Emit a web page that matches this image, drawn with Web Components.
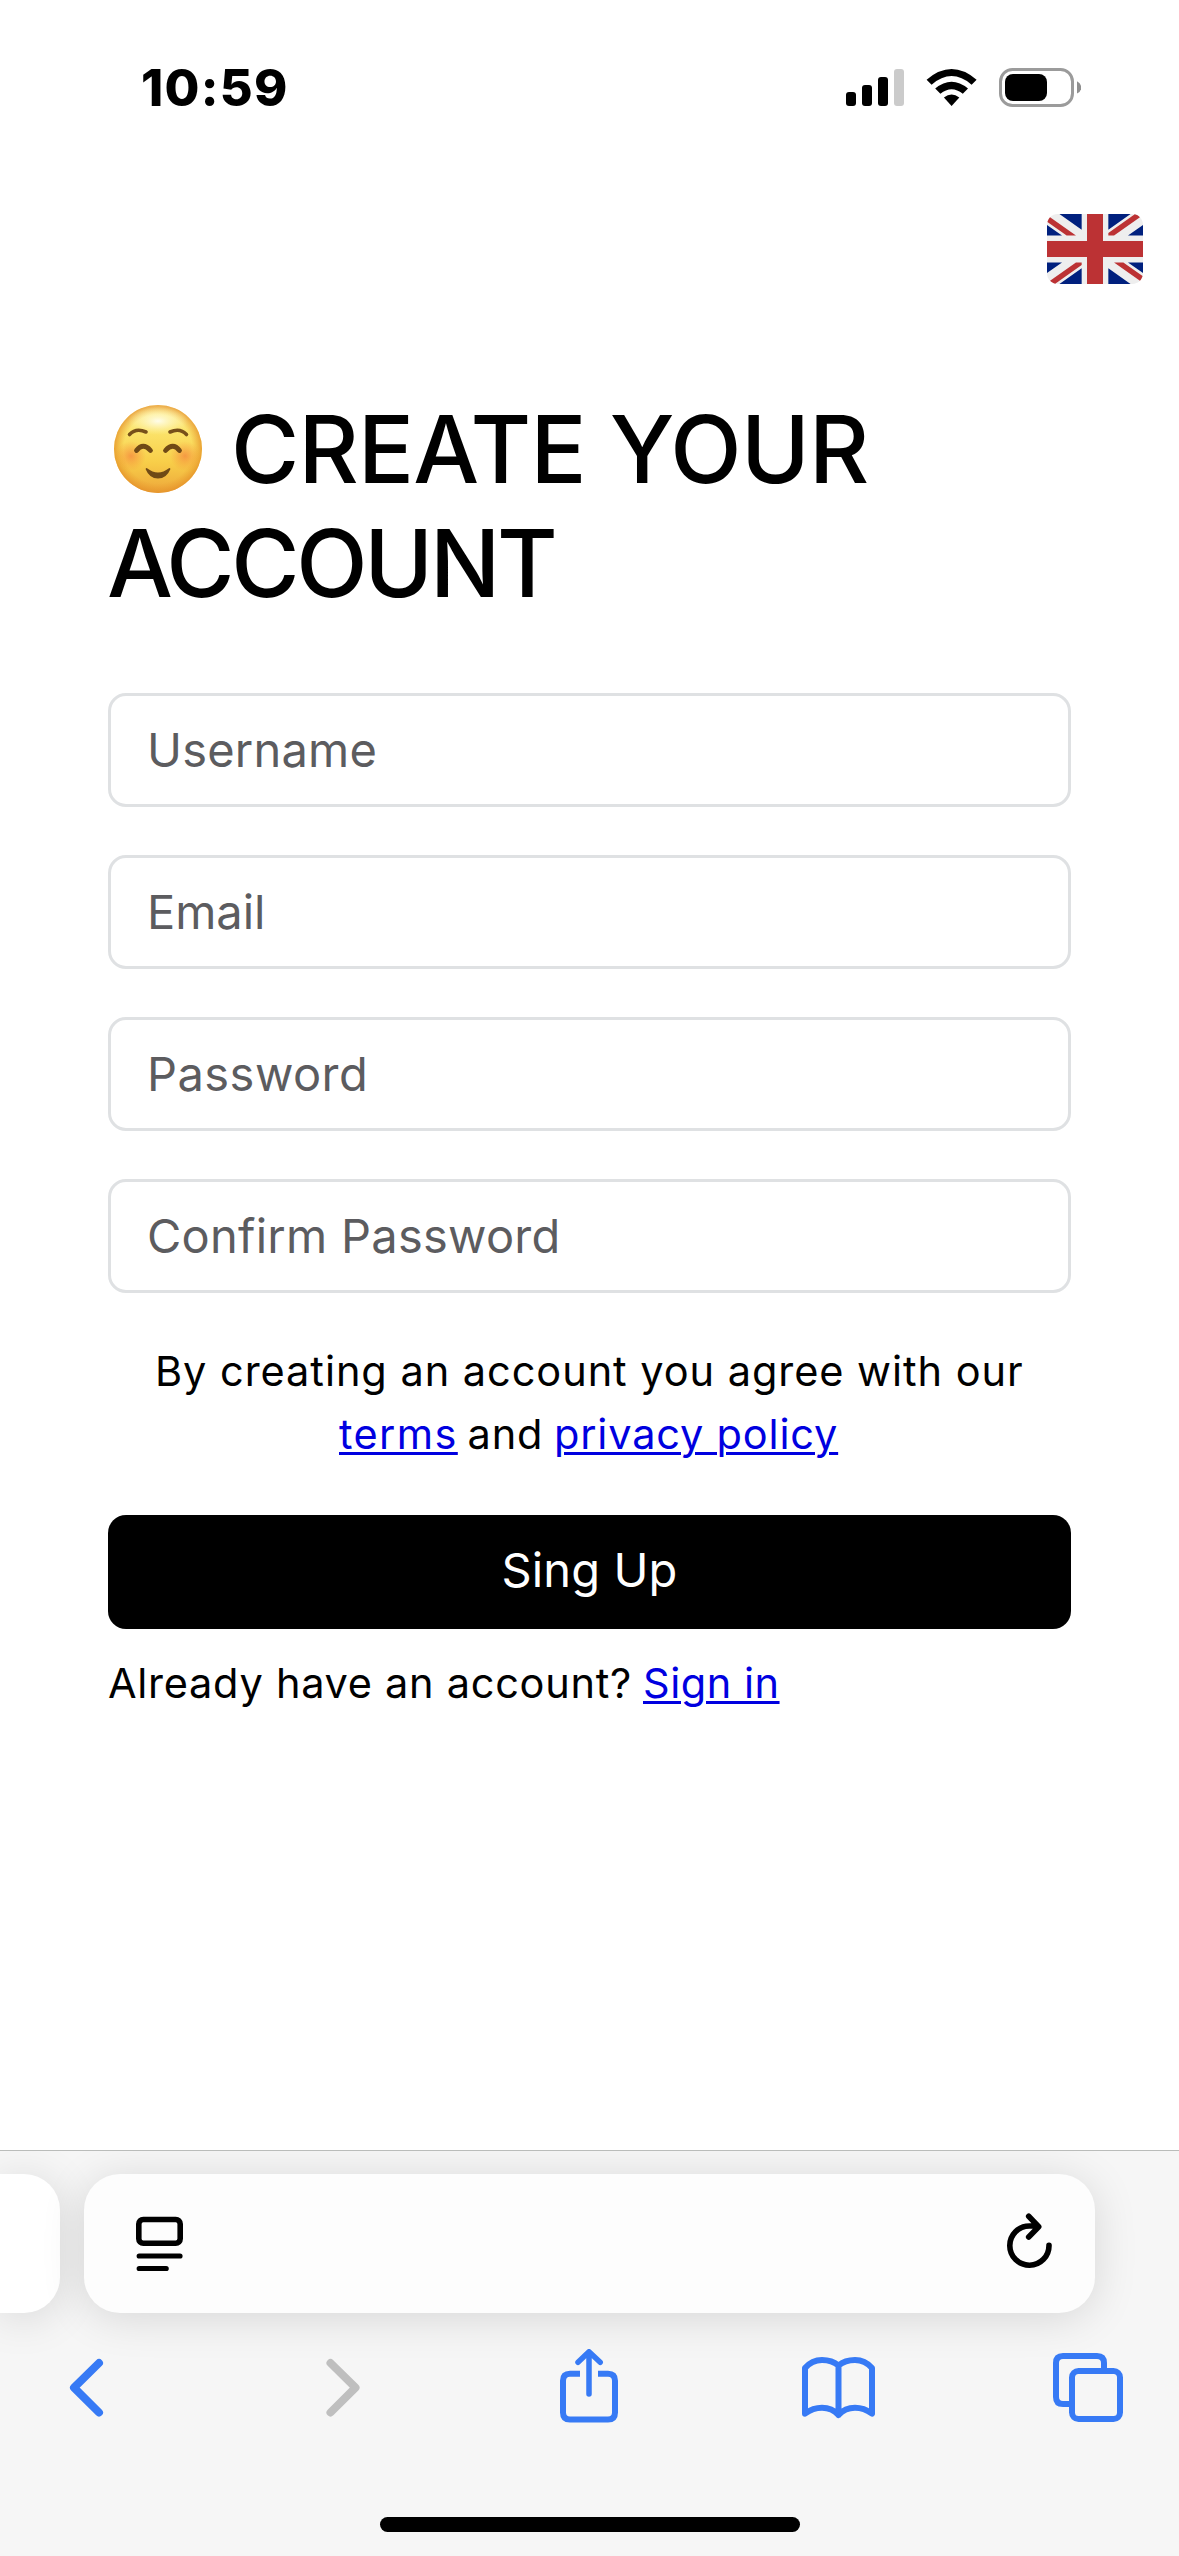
<!DOCTYPE html>
<html lang="en">
<head>
<meta charset="utf-8">
<title>Create your account</title>
<style>
  html, body { margin: 0; background: #fff; }
  body { width: 1179px; height: 2556px; overflow: hidden; font-family: Inter, "Liberation Sans", sans-serif; color: #000; }
</style>
</head>
<body>
<signup-screen></signup-screen>
<script>
const define = (name, html, ready) => {
  const tpl = document.createElement('template');
  tpl.innerHTML = html.trim();
  customElements.define(name, class extends HTMLElement {
    constructor() {
      super();
      this.attachShadow({ mode: 'open' }).append(tpl.content.cloneNode(true));
    }
    connectedCallback() { if (ready) ready(this, this.shadowRoot); }
  });
};

// Tracks its label out or in so the glyphs span exactly `width` pixels.
define('tracked-text', `
  <style>
    :host { display: block; flex: none; }
    :host([link]) span { color: #0000e0; text-decoration: underline 3px; text-underline-offset: 3px; }
    span { display: block; width: max-content; white-space: pre; }
  </style><span></span>`, (host, root) => {
  const span = root.querySelector('span');
  const text = host.getAttribute('text');
  const width = +host.getAttribute('width');
  span.textContent = text;
  const cs = getComputedStyle(host);
  const ctx = document.createElement('canvas').getContext('2d');
  ctx.font = `${cs.fontWeight} ${cs.fontSize} ${cs.fontFamily}`;
  const m = ctx.measureText(text);
  const ink = m.actualBoundingBoxRight + m.actualBoundingBoxLeft;
  host.style.width = width + 'px';
  span.style.letterSpacing = (width - ink) / (text.length - 1) + 'px';
  span.style.marginLeft = m.actualBoundingBoxLeft + 'px';
});

define('status-bar', `
  <style>
    :host { display: flex; justify-content: space-between; align-items: flex-start; height: 156px; padding: 58px 98px 0 143px; box-sizing: border-box; font-size: 50.500px; line-height: 60px; font-weight: 800; }
    .icons { display: flex; gap: 22px; padding-top: 10px; }
    svg { display: block; }
  </style>
  <tracked-text text="10:59" width="143"></tracked-text>
  <div class="icons">
    <svg width="58" height="39" viewBox="846 68 58 39"><rect x="846" y="92" width="10" height="14" rx="3"/><rect x="862" y="85" width="10" height="21" rx="3"/><rect x="878" y="77" width="10" height="29" rx="3"/><rect x="894" y="69" width="10" height="37" rx="3" fill="#cbcbcb"/></svg>
    <svg width="51" height="39" viewBox="926 68 51 39"><path d="M926.6 79.7Q951.6 58.3 976.6 79.7L971.6 84.7Q951.6 67.5 931.6 84.7Z"/><path d="M935.2 88.6Q951.6 75 968 88.6L962.8 93.8Q951.6 84.8 940.4 93.8Z"/><path d="M943.9 97.4Q951.6 91.4 959.3 97.4L951.6 106Z"/></svg>
    <svg width="82" height="39" viewBox="999 68 82 39"><rect x="1000.5" y="69.5" width="72" height="36" rx="12" fill="none" stroke="#9b9b9b" stroke-width="3"/><rect x="1005" y="74" width="42" height="27" rx="8"/><path d="M1077 81.3Q1081.2 83.5 1081.2 87.5T1077 93.6Z" fill="#8f8f8f"/></svg>
  </div>`);

define('language-flag', `
  <style>:host { display: flex; justify-content: flex-end; height: 178px; padding: 58px 36px 0 0; } svg { display: block; }</style>
  <svg width="96" height="70" viewBox="0 5 36 26" preserveAspectRatio="none" role="img" aria-label="English">
    <rect y="5" width="36" height="26" rx="4" fill="#eee"/>
    <path fill="#00207e" d="M0 9.06V13h5.63zM4.66 31H13v-5.84zM23 25.16V31h8.33zM0 23v3.94L5.63 23zM31.34 5H23v5.84zM36 26.94V23h-5.63zM36 13V9.06L30.37 13zM13 5H4.66L13 10.84z"/>
    <path fill="#bc3234" d="M25.14 23l9.71 6.8c.47-.48.81-1.08.99-1.75L28.63 23zM13 23h-2.14l-9.71 6.8c.52.53 1.19.91 1.94 1.09L13 23.94zM23 13h2.14l9.71-6.8c-.52-.53-1.19-.91-1.94-1.09L23 12.06zM10.86 13L1.15 6.2C.68 6.68.34 7.28.16 7.95L7.37 13zM21 5h-6v10H0v6h15v10h6V21h15v-6H21z"/>
  </svg>`);

define('smiling-face', `
  <style>:host { display: block; width: 88px; height: 88px; } svg { display: block; }</style>
  <svg width="88" height="88" viewBox="0 0 88 88" fill="none" stroke-linecap="round">
    <defs>
      <linearGradient id="skin" x1="0" y1="0" x2="0" y2="1"><stop offset="0" stop-color="#fff3a6"/><stop offset=".3" stop-color="#fbe36a"/><stop offset=".65" stop-color="#f8ce49"/><stop offset="1" stop-color="#eda63a"/></linearGradient>
      <radialGradient id="rim"><stop offset=".78" stop-color="#e99a2c" stop-opacity="0"/><stop offset="1" stop-color="#e48f28" stop-opacity=".75"/></radialGradient>
      <radialGradient id="shine"><stop offset="0" stop-color="#fffef0" stop-opacity=".95"/><stop offset="1" stop-color="#fff6b0" stop-opacity="0"/></radialGradient>
      <radialGradient id="blush"><stop offset="0" stop-color="#f47b3c" stop-opacity=".65"/><stop offset="1" stop-color="#f68a3c" stop-opacity="0"/></radialGradient>
    </defs>
    <circle cx="44" cy="44" r="44" fill="url(#skin)"/><circle cx="44" cy="44" r="44" fill="url(#rim)"/>
    <ellipse cx="44" cy="16" rx="30" ry="14" fill="url(#shine)"/>
    <circle cx="17" cy="51" r="15" fill="url(#blush)"/><circle cx="71" cy="51" r="15" fill="url(#blush)"/>
    <path d="M15.500 29.500Q22 22.500 32 27M56 27Q66 22.500 72.500 29.500" stroke="#77501a" stroke-width="3.600"/>
    <path d="M22.500 45.500Q29 37 36.500 45.500M51.500 45.500Q59 37 65.500 45.500" stroke="#704a16" stroke-width="4.800"/>
    <path d="M32.500 64Q44 73 55.500 64Q52 72.700 44 72.700T32.500 64Z" fill="#704a16" stroke="#704a16" stroke-width="1.800" stroke-linejoin="round"/>
  </svg>`);

define('page-title', `
  <style>
    :host { display: flex; flex-direction: column; font-size: 93px; line-height: 114px; font-weight: 500; }
    .row { display: flex; gap: 34px; padding-left: 6px; }
    .row + tracked-text { margin-left: 1px; }
    smiling-face { margin-top: 13px; }
  </style>
  <div class="row"><smiling-face role="img" aria-label="Smiling face"></smiling-face><tracked-text text="CREATE YOUR" width="631"></tracked-text></div>
  <tracked-text text="ACCOUNT" width="445"></tracked-text>`);

define('text-field', `
  <style>:host { display: block; box-sizing: border-box; height: 114px; border: 3px solid #dfe1e3; border-radius: 18px; padding-left: 39px; font-size: 47px; line-height: 108px; color: #5c5c5f; }</style>
  <slot></slot>`);

define('primary-button', `
  <style>:host { display: flex; justify-content: center; height: 114px; border-radius: 18px; background: #000; color: #fff; font-size: 47px; line-height: 110px; }</style>
  <slot></slot>`);

define('signup-form', `
  <style>
    :host { display: block; margin: 0 108px; height: 1758px; padding-top: 58px; box-sizing: border-box; }
    .fields { display: flex; flex-direction: column; gap: 48px; padding-top: 73px; }
    .note { font-size: 41.500px; line-height: 63px; }
    .legal { padding: 47px 0 49px; display: flex; flex-direction: column; }
    .line { display: flex; align-items: baseline; }
    .legal .first { padding-left: 50px; } .legal .second { padding-left: 231px; }
    .signin { padding: 23px 0 0 1px; gap: 15px; }
  </style>
  <page-title></page-title>
  <div class="fields">
    <text-field><tracked-text style="margin-left:1px" text="Username" width="224.500"></tracked-text></text-field>
    <text-field><tracked-text style="margin-left:1px" text="Email" width="111"></tracked-text></text-field>
    <text-field><tracked-text style="margin-left:1px" text="Password" width="214"></tracked-text></text-field>
    <text-field><tracked-text style="margin-left:-1px" text="Confirm Password" width="408.500"></tracked-text></text-field>
  </div>
  <div class="note legal">
    <div class="line first"><tracked-text text="By creating an account you agree with our" width="864"></tracked-text></div>
    <div class="line second"><tracked-text link text="terms" width="115.500"></tracked-text><tracked-text style="margin:0 17px 0 14px" text="and" width="71.500"></tracked-text><tracked-text link text="privacy policy" width="280"></tracked-text></div>
  </div>
  <primary-button><tracked-text text="Sing Up" width="172"></tracked-text></primary-button>
  <div class="note line signin"><tracked-text text="Already have an account?" width="521"></tracked-text><tracked-text link text="Sign in" width="131.500"></tracked-text></div>`);

define('safari-toolbar', `
  <style>
    :host { display: block; flex: 1; overflow: hidden; background: #f6f6f6; border-top: 1px solid #babcba; margin-top: 58px; }
    .tabs { display: flex; gap: 24px; padding-top: 23px; }
    .pill { box-sizing: border-box; height: 139px; background: #fdfdfd; box-shadow: 0 5px 44px rgba(0,0,0,.13); border-radius: 36px; }
    .prev { width: 60px; border-radius: 0 36px 36px 0; background: #fff; }
    .address { width: 1011px; display: flex; justify-content: space-between; align-items: flex-start; padding: 39px 42px 0 51px; }
    .actions { display: grid; grid-template-columns: 256px 234px 243px 250px 74px; align-items: start; padding: 36px 0 0 68px; height: 168px; box-sizing: content-box; }
    svg { display: block; fill: none; stroke-linecap: round; stroke-linejoin: round; }
    .actions svg { stroke: #377af5; }
    .home { width: 420px; height: 15px; border-radius: 8px; background: #000; margin: 0 auto; }
  </style>
  <div class="tabs">
    <div class="pill prev"></div>
    <div class="pill address">
      <svg width="50" height="62" viewBox="135 2213 50 62" stroke="#000" stroke-width="5.600"><rect x="138.800" y="2219.500" width="41.400" height="23.800" rx="4.500"/><path d="M139.200 2256H180M139.200 2268.500H166.200" stroke-width="5.200"/></svg>
      <svg width="50" height="62" viewBox="1003 2213 50 62" stroke="#000" stroke-width="5.600"><path d="M1049 2245.300A19.600 19.600 0 1 1 1029.400 2226H1038M1028.700 2216.200L1038.700 2226.700L1028.700 2237"/></svg>
    </div>
  </div>
  <div class="actions">
    <svg width="38" height="76" viewBox="68 2349 38 76" stroke-width="8"><path d="M99 2363L74 2387.700L99 2412.500"/></svg>
    <svg width="38" height="76" viewBox="324 2349 38 76" stroke-width="8" style="stroke:#bfbfbf"><path d="M330.500 2363L355.500 2387.700L330.500 2412.500"/></svg>
    <svg width="62" height="76" viewBox="558 2349 62 76" stroke-width="6"><path stroke-linecap="butt" d="M580 2373.700H570Q563 2373.700 563 2380.700V2412.600Q563 2419.600 570 2419.600H608Q615 2419.600 615 2412.600V2380.700Q615 2373.700 608 2373.700H598"/><path stroke-width="5.500" d="M589 2352V2394M578 2362.300L589 2351.800L600.200 2362.300"/></svg>
    <svg width="76" height="76" viewBox="801 2349 76 76" stroke-width="6"><path d="M838.500 2365.500Q832 2360 822 2360Q812 2360 805 2368V2413.700Q813 2407.800 822 2407.800Q832 2407.800 838.500 2415Q845 2407.800 855 2407.800Q864 2407.800 872 2413.700V2368Q865 2360 855 2360Q845 2360 838.500 2365.500V2415"/></svg>
    <svg width="74" height="76" viewBox="1051 2349 74 76" stroke-width="6"><path stroke-linecap="butt" d="M1069 2404H1063Q1056 2404 1056 2397V2363Q1056 2356 1063 2356H1097Q1104 2356 1104 2363V2368"/><rect x="1072" y="2371" width="48" height="48" rx="6.500"/></svg>
  </div>
  <div class="home"></div>`);

define('signup-screen', `
  <style>:host { display: flex; flex-direction: column; width: 1179px; height: 2556px; background: #fff; } language-flag { box-sizing: border-box; }</style>
  <status-bar></status-bar>
  <language-flag></language-flag>
  <signup-form></signup-form>
  <safari-toolbar></safari-toolbar>`);
</script>
</body>
</html>
